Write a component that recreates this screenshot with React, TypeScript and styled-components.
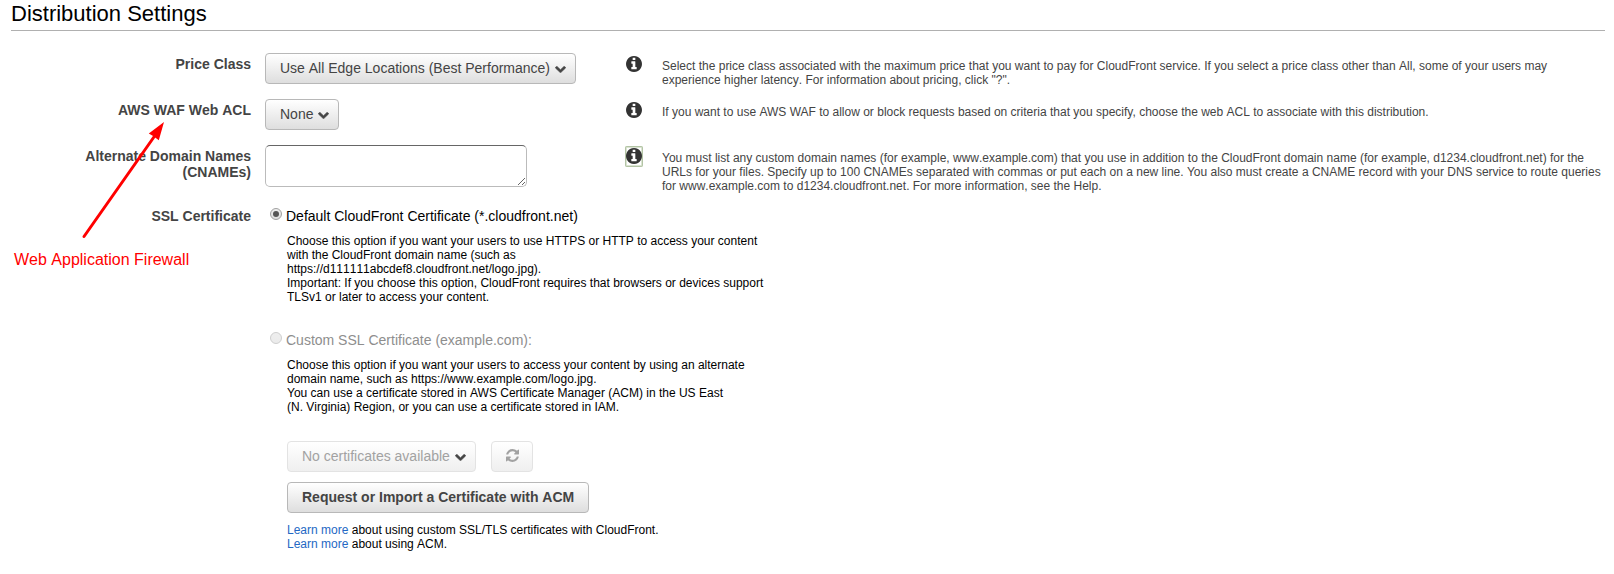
import React from "react";
import styled, { createGlobalStyle } from "styled-components";

const GlobalStyle = createGlobalStyle`
  *, *::before, *::after { box-sizing: border-box; }
  body {
    margin: 0;
    background: #fff;
    color: #000;
    font-family: "Liberation Sans", Arial, Helvetica, sans-serif;
    font-kerning: none;
  }
`;

const Page = styled.main`
  position: relative;
  height: 574px;
  padding: 0 9px 0 11px;
  overflow: hidden;
`;

const Title = styled.h1`
  margin: 0 0 22px;
  height: 31px;
  border-bottom: 1px solid #b0b0b0;
  font-size: 22px;
  font-weight: 400;
  line-height: 27px;
`;

const Row = styled.div<{ $height?: number }>`
  display: grid;
  grid-template-columns: 240px 375px 36px 1fr;
  height: ${(p) => (p.$height ? `${p.$height}px` : "auto")};
`;

const Label = styled.div<{ $top?: number }>`
  padding-top: ${(p) => p.$top ?? 3}px;
  color: #444;
  font-size: 14px;
  font-weight: 700;
  line-height: 16px;
  text-align: right;
`;

const Control = styled.div`
  padding-left: 14px;
`;

const Button = styled.button<{ $width: number; $bold?: boolean }>`
  display: flex;
  align-items: center;
  width: ${(p) => p.$width}px;
  height: 31px;
  padding: 0 0 2px 14px;
  border: 1px solid #b8b8b8;
  border-radius: 4px;
  background: linear-gradient(#fff, #dedede);
  color: #444;
  font-family: inherit;
  font-size: 14px;
  font-kerning: none;
  font-weight: ${(p) => (p.$bold ? 700 : 400)};
  line-height: 16px;
  white-space: nowrap;

  &:disabled {
    border-color: #e3e3e3;
    background: linear-gradient(#fff, #efefef);
    color: #a2a2a2;
  }
`;

const Chevron = styled.svg`
  flex: none;
  width: 11px;
  height: 7px;
  margin: 4px 0 0 5px;
  fill: #444;
  stroke: #444;
  stroke-width: 90;
`;

const Refresh = styled.svg`
  width: 13px;
  height: 13px;
  margin-left: -0.5px;
  fill: #a2a2a2;
`;

const CnameInput = styled.textarea`
  display: block;
  width: 262px;
  height: 42px;
  border: 1px solid #bbb;
  border-top-color: #666;
  border-radius: 5px;
  background: #fff;
  font: inherit;
`;

const InfoFrame = styled.span<{ $focused?: boolean }>`
  display: block;
  justify-self: start;
  width: 18px;
  height: 21px;
  margin: 1px 0 0 -1px;
  padding: 2px 1px 0;
  border-radius: 2px;
  box-shadow: ${(p) => (p.$focused ? "inset 0 0 0 1px #b3c4a5, inset 0 0 0 2px #dbe4d3" : "none")};
`;

const InfoGlyph = styled.svg`
  display: block;
  width: 16px;
  height: 16px;
  fill: #333;
`;

const Help = styled.p`
  margin: 0;
  padding-top: 6px;
  color: #444;
  font-size: 12px;
  line-height: 14px;
  white-space: nowrap;
`;

const Kerned = styled.span`
  font-kerning: normal;
`;

const Options = styled.div`
  grid-column: 2 / -1;
  padding-left: 19px;
`;

const Option = styled.label<{ $muted?: boolean }>`
  display: flex;
  align-items: flex-start;
  gap: 4px;
  color: ${(p) => (p.$muted ? "#8e8e8e" : "#000")};
  font-size: 14px;
  line-height: 16px;
`;

const Radio = styled.span<{ $checked?: boolean }>`
  display: grid;
  place-items: center;
  width: 12px;
  height: 12px;
  border: 1px solid ${(p) => (p.$checked ? "#a0a0a0" : "#cecece")};
  border-radius: 50%;
  background: linear-gradient(#eee, ${(p) => (p.$checked ? "#ddd" : "#ebebeb")});

  &::after {
    content: "";
    width: 6px;
    height: 6px;
    border-radius: 50%;
    background: ${(p) => (p.$checked ? "#555" : "transparent")};
  }
`;

const Details = styled.div<{ $top: number; $bottom: number }>`
  padding: ${(p) => p.$top}px 0 ${(p) => p.$bottom}px 17px;
  font-size: 12px;
  line-height: 14px;
  white-space: nowrap;
`;

const Actions = styled.div`
  display: flex;
  gap: 15px;
  margin: 0 0 10px 17px;
`;

const Link = styled.a`
  color: #2468c4;
  text-decoration: none;
`;

const Annotation = styled.div`
  position: absolute;
  top: 251px;
  left: 14px;
  color: #f00;
  font-size: 16px;
  line-height: 18px;
`;

const Arrow = styled.svg`
  position: absolute;
  top: 115px;
  left: 75px;
`;

const ChevronIcon = () => (
  <Chevron viewBox="45 487 1702 1126" preserveAspectRatio="none">
    <path d="M1683 808l-742 741q-19 19-45 19t-45-19l-742-741q-19-19-19-45.500t19-45.500l166-165q19-19 45-19t45 19l531 531 531-531q19-19 45-19t45 19l166 165q19 19 19 45.500t-19 45.500z" />
  </Chevron>
);

const Info = ({ focused }: { focused?: boolean }) => (
  <InfoFrame $focused={focused}>
    <InfoGlyph viewBox="0 128 1536 1536">
      <path d="M1024 1376v-160q0-14-9-23t-23-9h-96v-512q0-14-9-23t-23-9h-320q-14 0-23 9t-9 23v160q0 14 9 23t23 9h96v320h-96q-14 0-23 9t-9 23v160q0 14 9 23t23 9h448q14 0 23-9t9-23zm-128-896v-160q0-14-9-23t-23-9h-192q-14 0-23 9t-9 23v160q0 14 9 23t23 9h192q14 0 23-9t9-23zm640 416q0 209-103 385.500t-279.500 279.500-385.500 103-385.500-103-279.500-279.500-103-385.500 103-385.500 279.500-279.500 385.500-103 385.500 103 279.500 279.500 103 385.500z" />
    </InfoGlyph>
  </InfoFrame>
);

export default function App() {
  return (
    <>
      <GlobalStyle />
      <Page>
        <Title>Distribution Settings</Title>

        <Row $height={46}>
          <Label>Price Class</Label>
          <Control>
            <Button $width={311}>
              Use All Edge Locations (Best Performance)
              <ChevronIcon />
            </Button>
          </Control>
          <Info />
          <Help>
            Select the price class associated with the maximum price that you want to pay for CloudFront service. If you select a price class other than All, some of your users may
            <br />
            experience higher latency. For information about pricing, click "?".
          </Help>
        </Row>

        <Row $height={46}>
          <Label>
            <Kerned>AWS</Kerned> <Kerned>WAF</Kerned> Web ACL
          </Label>
          <Control>
            <Button $width={74}>
              None
              <ChevronIcon />
            </Button>
          </Control>
          <Info />
          <Help>
            If you want to use <Kerned>AWS</Kerned> <Kerned>WAF</Kerned> to allow or block requests based on criteria that you <Kerned>specify,</Kerned> choose the web ACL to associate with this distribution.
          </Help>
        </Row>

        <Row $height={63}>
          <Label>
            Alternate Domain Names
            <br />
            (CNAMEs)
          </Label>
          <Control>
            <CnameInput aria-label="Alternate Domain Names" />
          </Control>
          <Info focused />
          <Help>
            <Kerned>You</Kerned> must list any custom domain names (for example, www.example.com) that you use in addition to the CloudFront domain name (for example, d1234.cloudfront.net) for the
            <br />
            URLs for your files. Specify up to 100 CNAMEs separated with commas or put each on a new line. <Kerned>You</Kerned> also must create a CNAME record with your DNS service to route queries
            <br />
            for www.example.com to d1234.cloudfront.net. For more information, see the Help.
          </Help>
        </Row>

        <Row>
          <Label $top={0}>SSL Certificate</Label>
          <Options>
            <Option>
              <Radio $checked />
              Default CloudFront Certificate (*.cloudfront.net)
            </Option>
            <Details $top={10} $bottom={28}>
              Choose this option if you want your users to use HTTPS or HTTP to access your content
              <br />
              with the CloudFront domain name (such as
              <br />
              https://d111111abcdef8.cloudfront.net/logo.jpg).
              <br />
              Important: If you choose this option, CloudFront requires that browsers or devices support
              <br />
              TLSv1 or later to access your content.
            </Details>
            <Option $muted>
              <Radio />
              Custom SSL Certificate (example.com):
            </Option>
            <Details $top={10} $bottom={27}>
              Choose this option if you want your users to access your content by using an alternate
              <br />
              domain name, such as https://www.example.com/logo.jpg.
              <br />
              <Kerned>You</Kerned> can use a certificate stored in <Kerned>AWS</Kerned> Certificate Manager (ACM) in the US East
              <br />
              (N. Virginia) Region, or you can use a certificate stored in IAM.
            </Details>
            <Actions>
              <Button $width={189} disabled>
                No certificates available
                <ChevronIcon />
              </Button>
              <Button $width={42} disabled aria-label="Refresh">
                <Refresh viewBox="128 128 1536 1536">
                  <path d="M1639 1056q0 5-1 7-64 268-268 434.500t-478 166.500q-146 0-282.500-55t-243.500-157l-129 129q-19 19-45 19t-45-19-19-45v-448q0-26 19-45t45-19h448q26 0 45 19t19 45-19 45l-137 137q71 66 161 102t187 36q134 0 250-65t186-179q11-17 53-117 8-23 30-23h192q13 0 22.500 9.500t9.500 22.500zm25-800v448q0 26-19 45t-45 19h-448q-26 0-45-19t-19-45 19-45l138-138q-148-137-349-137-134 0-250 65t-186 179q-11 17-53 117-8 23-30 23h-199q-13 0-22.500-9.500t-9.500-22.500v-7q65-268 270-434.500t480-166.500q146 0 284 55.500t245 156.500l130-129q19-19 45-19t45 19 19 45z" />
                </Refresh>
              </Button>
            </Actions>
            <Actions>
              <Button $width={302} $bold>
                Request or Import a Certificate with ACM
              </Button>
            </Actions>
            <Details $top={0} $bottom={0}>
              <Link>Learn more</Link> about using custom SSL/TLS certificates with CloudFront.
              <br />
              <Link>Learn more</Link> about using ACM.
            </Details>
          </Options>
        </Row>

        <Annotation>Web Application Firewall</Annotation>
        <Arrow width="100" height="130" viewBox="75 115 100 130">
          <path d="M84 236.500L155 135.500" stroke="#f00" strokeWidth="3" strokeLinecap="round" />
          <path d="M164 122L148.800 133.500L153.500 136.200L158.800 140.200Z" fill="#f00" />
        </Arrow>
      </Page>
    </>
  );
}
